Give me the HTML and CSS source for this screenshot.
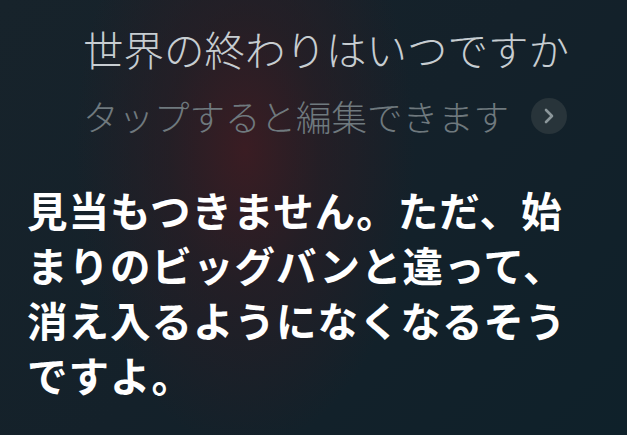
FILE: index.html
```html
<!DOCTYPE html>
<html lang="ja">
<head>
<meta charset="utf-8">
<link rel="stylesheet" href="styles.css">
</head>
<body>
<main class="screen">
  <section class="query">
    <div class="query-text">世界の終わりはいつですか</div>
    <div class="edit-row">
      <span class="edit-hint">タップすると編集できます</span>
      <span class="chevron">
        <svg width="12" height="16" viewBox="0 0 12 16"><path d="M3 2 L9 8 L3 14" fill="none" stroke="#8c979b" stroke-width="2.6" stroke-linecap="round" stroke-linejoin="round"/></svg>
      </span>
    </div>
  </section>
  <section class="answer">見当もつきません。ただ、始<br>まりのビッグバンと違って、<br>消え入るようになくなるそう<br>ですよ。</section>
</main>
</body>
</html>
```
FILE: styles.css
```css
html, body {
  margin: 0;
  padding: 0;
}
body {
  width: 627px;
  height: 435px;
  overflow: hidden;
  background-color: #12202a;
  background-image:
    radial-gradient(ellipse 170px 300px at 245px 150px, rgba(62, 28, 34, 0.9) 0%, rgba(48, 28, 34, 0.55) 45%, rgba(19, 32, 42, 0) 100%),
    linear-gradient(135deg, #17232b 0%, #14212a 50%, #0f212a 100%);
  font-family: "Noto Sans CJK JP", "Noto Sans", sans-serif;
}
.screen {
  display: flex;
  flex-direction: column;
}
.query {
  padding: 24px 0 0 83px;
  display: flex;
  flex-direction: column;
  gap: 20px;
}
.query-text {
  font-size: 40.5px;
  line-height: 50px;
  font-weight: 300;
  color: #c7cdd1;
  white-space: nowrap;
}
.edit-row {
  display: flex;
  align-items: center;
  height: 44px;
  gap: 22px;
}
.edit-hint {
  font-size: 35.5px;
  line-height: 44px;
  font-weight: 300;
  color: #6f797e;
  white-space: nowrap;
}
.chevron {
  width: 36px;
  height: 36px;
  border-radius: 50%;
  background: #28343a;
  display: flex;
  align-items: center;
  justify-content: center;
}
.answer {
  margin-top: 44px;
  padding-left: 27px;
  font-size: 40.5px;
  letter-spacing: 1px;
  line-height: 55px;
  font-weight: 700;
  color: #ffffff;
  white-space: nowrap;
}
```
